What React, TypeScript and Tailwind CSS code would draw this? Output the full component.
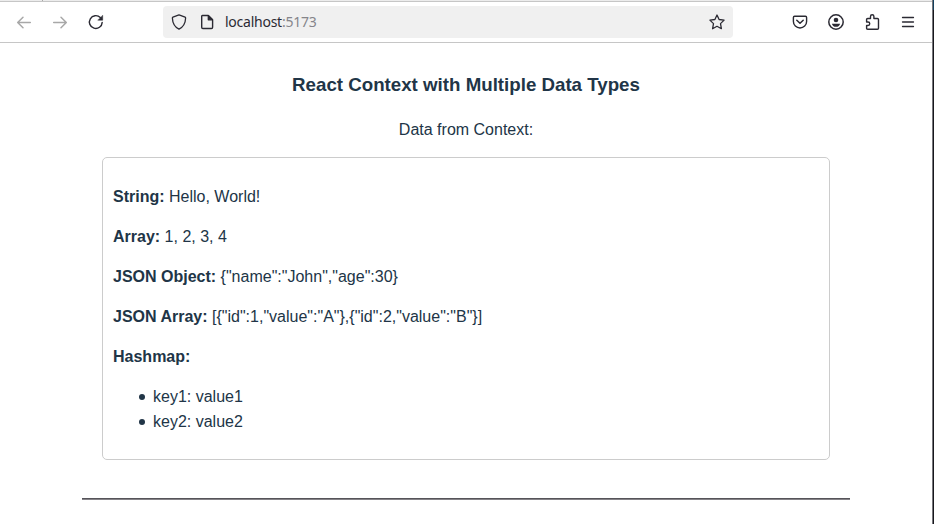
import type { ReactNode } from "react";

function Icon({ children, className = "" }: { children: ReactNode; className?: string }) {
  return (
    <svg
      viewBox="0 0 16 16"
      className={`size-4 shrink-0 overflow-visible ${className}`}
      fill="none"
      stroke="currentColor"
      strokeWidth="1.3"
      strokeLinecap="round"
      strokeLinejoin="round"
    >
      {children}
    </svg>
  );
}

function Toolbar() {
  return (
    <header className="flex h-[43px] flex-col border-b border-[#c6c6c6] bg-white text-[#2b2a33]">
      <div className="flex h-[2px] border-b border-[#c6c6c6] bg-[#ececec]">
        <div className="w-[43px] border-r border-[#a8a8a8]" />
      </div>
      <div className="flex h-10 items-center pl-4">
        <Icon className="text-[#a8a8a8]">
          <path d="M14.3 8.5H1.8M7 3.2L1.7 8.5L7 13.8" strokeWidth="1.5" />
        </Icon>
        <Icon className="ml-5 text-[#a8a8a8]">
          <path d="M1.7 8.5H14.2M9 3.2L14.3 8.5L9 13.8" strokeWidth="1.5" />
        </Icon>
        <Icon className="ml-5">
          <path d="M14.2 8.4A6.4 6.4 0 1 1 12.3 3.5" strokeWidth="1.4" />
          <path d="M14.7 1.6V6.2H10.1Z" fill="currentColor" strokeWidth="0.5" />
        </Icon>
        <div className="ml-[59px] flex h-8 w-[570px] items-center rounded bg-[#f0f0f0] pl-2">
          <Icon>
            <path d="M8 .9L14.1 3.2Q14.7 3.5 14.6 4.2C14.4 9.3 12.2 13 8 15.1C3.8 13 1.6 9.3 1.4 4.2Q1.3 3.5 1.9 3.2Z" />
          </Icon>
          <Icon className="ml-3">
            <path d="M3.4 1.5H9.3L13.6 5.8V13.3Q13.6 14.5 12.4 14.5H3.9Q2.7 14.5 2.7 13.3V2.2Q2.7 1.5 3.4 1.5Z" strokeWidth="1.4" />
            <path d="M9.3 1.7V5.8H13.4Z" fill="currentColor" />
          </Icon>
          <span className="ml-[10px] w-[92px] whitespace-nowrap font-['Noto_Sans',sans-serif] text-[14px] leading-5 tracking-[-0.25px] text-[#2b2a33]">
            localhost<span className="text-[#85858a]">:5173</span>
          </span>
          <Icon className="ml-auto mr-2">
            <path d="M8 1L10.1 5.5L15.1 6.1L11.5 9.6L12.4 14.7L8 12.3L3.6 14.7L4.5 9.6L.9 6.1L5.9 5.5Z" />
          </Icon>
        </div>
        <Icon className="ml-[59px]">
          <path d="M2.6 2.2H13.4Q14.6 2.2 14.6 3.4V7.5A6.6 6.5 0 0 1 1.4 7.5V3.4Q1.4 2.2 2.6 2.2Z" strokeWidth="1.4" />
          <path d="M4.8 6.2L8 9.3L11.2 6.2" strokeWidth="1.5" />
        </Icon>
        <Icon className="ml-5">
          <circle cx="8" cy="8" r="7.2" strokeWidth="1.5" />
          <circle cx="8" cy="6" r="2.3" fill="currentColor" stroke="none" />
          <path d="M3.9 9.7H12.1Q11.4 12.8 8 12.8Q4.6 12.8 3.9 9.7Z" fill="currentColor" stroke="none" />
        </Icon>
        <Icon className="ml-5">
          <path d="M2.6 8V5.6Q2.6 4.5 3.7 4.5H6.5V2.5A1.7 1.7 0 0 1 9.9 2.5V4.5H13.4Q14.5 4.5 14.5 5.6V14.2Q14.5 15.3 13.4 15.3H3.7Q2.6 15.3 2.6 14.2V11.5H4A1.75 1.75 0 0 0 4 8Z" strokeWidth="1.4" />
        </Icon>
        <Icon className="ml-5">
          <path d="M2.5 3.5H13.5M2.5 8H13.5M2.5 12.5H13.5" strokeWidth="1.3" />
        </Icon>
      </div>
    </header>
  );
}

const contextData = {
  text: "Hello, World!",
  numbers: [1, 2, 3, 4],
  person: { name: "John", age: 30 },
  items: [
    { id: 1, value: "A" },
    { id: 2, value: "B" },
  ],
  map: new Map([
    ["key1", "value1"],
    ["key2", "value2"],
  ]),
};

function DataRow({ label, children }: { label: string; children?: ReactNode }) {
  return (
    <p>
      <strong>{label}:</strong> {children}
    </p>
  );
}

function Page() {
  return (
    <main className="mx-auto w-[768px] pt-7 font-['Liberation_Sans',Arial,sans-serif] text-base leading-6 text-[#213547]">
      <h3 className="text-center text-[18.72px] leading-7 font-bold">
        React Context with Multiple Data Types
      </h3>
      <p className="mt-[19px] text-center">Data from Context:</p>
      <section className="mx-5 mt-[15px] flex h-[303px] flex-col gap-4 rounded-[5px] border border-[#cccccc] px-[10px] pt-[27px]">
        <DataRow label="String">{contextData.text}</DataRow>
        <DataRow label="Array">{contextData.numbers.join(", ")}</DataRow>
        <DataRow label="JSON Object">{JSON.stringify(contextData.person)}</DataRow>
        <DataRow label="JSON Array">{JSON.stringify(contextData.items)}</DataRow>
        <DataRow label="Hashmap" />
        <ul className="flex flex-col gap-px pl-[26px]">
          {[...contextData.map].map(([key, value]) => (
            <li key={key} className="flex items-center gap-2">
              <span className="size-[6px] rounded-full bg-[#213547]" />
              <span>
                {key}: {value}
              </span>
            </li>
          ))}
        </ul>
      </section>
      <hr className="mt-[38px] h-[2px] border-t border-b border-t-[#555459] border-b-[#858388]" />
    </main>
  );
}

export default function App() {
  return (
    <div className="flex h-[524px] w-[934px] overflow-hidden bg-white">
      <div className="w-[932px] shrink-0">
        <Toolbar />
        <Page />
      </div>
      <div className="flex w-[2px] flex-col border-l border-[#77777c] bg-[#17171c]">
        <div className="h-[10px] bg-[#123f5c]" />
      </div>
    </div>
  );
}
